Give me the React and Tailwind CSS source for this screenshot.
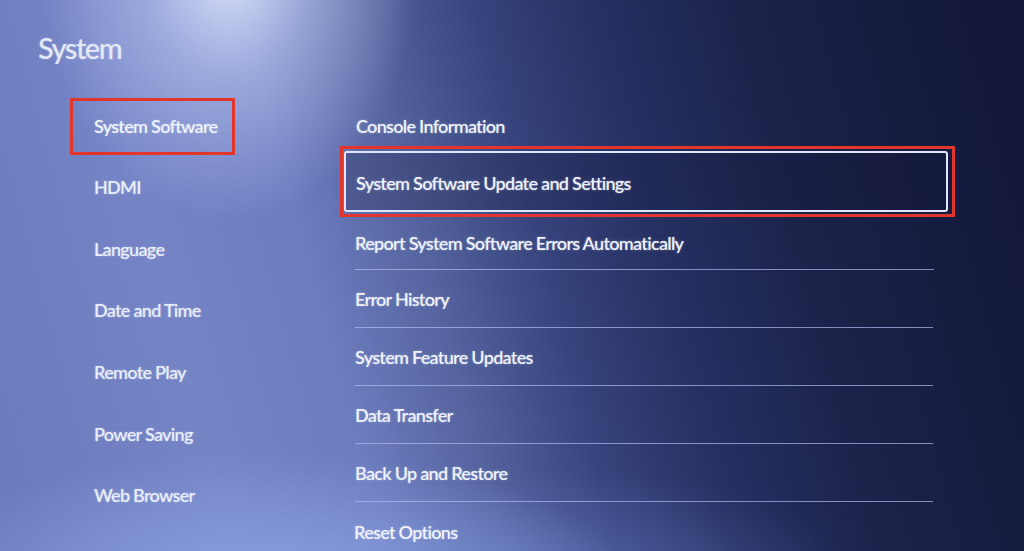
export default function App() {
  const left = ["HDMI", "Language", "Date and Time", "Remote Play", "Power Saving", "Web Browser"];
  const right = ["Error History", "System Feature Updates", "Data Transfer", "Back Up and Restore"];
  return (
    <div
      className="relative h-[551px] w-[1024px] overflow-hidden bg-[radial-gradient(ellipse_190px_260px_at_230px_-40px,rgba(228,234,255,0.95)_0%,rgba(200,212,250,0.5)_45%,rgba(200,212,250,0)_100%),radial-gradient(ellipse_380px_150px_at_260px_600px,rgba(150,175,240,0.75)_0%,rgba(150,175,240,0)_100%),radial-gradient(ellipse_300px_120px_at_560px_590px,rgba(110,135,210,0.45)_0%,rgba(110,135,210,0)_100%),linear-gradient(75deg,#6a79ba_0%,#7484c5_20%,#6c7cbe_33%,#55649f_43%,#37447d_53%,#263163_63%,#1b2249_76%,#151b3e_90%,#12173a_100%)] text-[#f0f3fc] font-['Lato',sans-serif] [text-shadow:0_0_3px_rgba(220,230,255,0.35)]"
    >
      <div className="pl-[38px] pt-[30px] text-[29px] leading-[36px] font-medium text-[#e4e8f7] tracking-[-1.5px]">System</div>
      <div className="flex pt-[32px]">
        <div className="ml-[70px] w-[270px] flex flex-col">
          <div className="h-[57px] w-[165px] border-[3px] border-[#e2352c] flex items-center pl-[21px] text-[18px] font-semibold tracking-[-0.7px]">
            System Software
          </div>
          <div className="mt-[2px] flex flex-col">
            {left.map((t) => (
              <div key={t} className="h-[61.6px] flex items-center pl-[24px] text-[18px] font-semibold tracking-[-0.7px] text-[#eaeefa]">
                {t}
              </div>
            ))}
          </div>
        </div>
        <div className="flex flex-col w-[620px] -mt-[1px]">
          <div className="h-[49px] pt-[9px] flex items-center pl-[16px] text-[18px] font-semibold tracking-[-0.7px]">Console Information</div>
          <div className="h-[71px] w-[615px] border-[3px] border-[#e2352c] pl-[1px] pr-[4px] py-[2px]">
            <div className="h-full w-full border-2 border-[#dfe5fb] rounded-[3px] flex items-center pl-[10px] pt-[4px] text-[18px] font-semibold tracking-[-0.7px] bg-[#121736]/25">
              System Software Update and Settings
            </div>
          </div>
          <div className="ml-[15px] w-[579px] h-[53px] flex items-center border-b border-[#b0bcf0]/70 text-[18px] font-semibold tracking-[-0.7px]">
            Report System Software Errors Automatically
          </div>
          {right.map((t) => (
            <div key={t} className="ml-[15px] w-[578px] h-[58px] flex items-center pt-[2px] border-b border-[#b0bcf0]/70 text-[18px] font-semibold tracking-[-0.7px]">
              {t}
            </div>
          ))}
          <div className="ml-[14px] h-[58px] flex items-center pt-[2px] text-[18px] font-semibold tracking-[-0.7px]">Reset Options</div>
        </div>
      </div>
    </div>
  );
}
